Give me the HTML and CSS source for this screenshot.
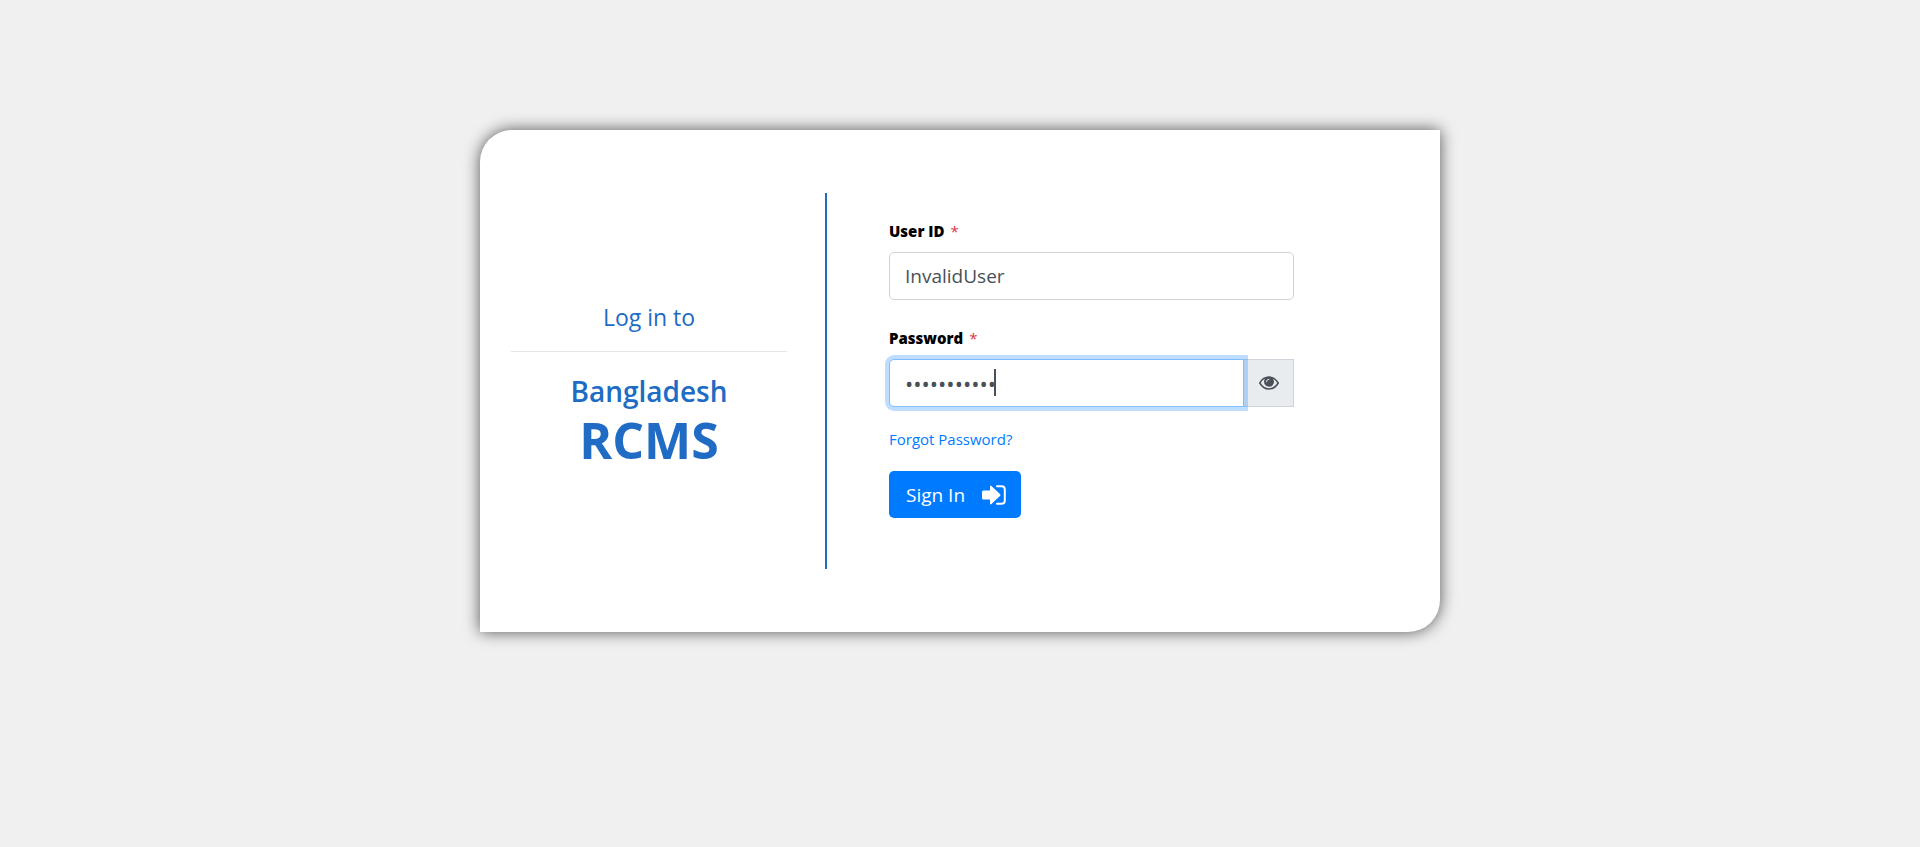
FILE: index.html
```html
<!DOCTYPE html>
<html lang="en">
<head>
<meta charset="utf-8">
<meta name="viewport" content="width=device-width, initial-scale=1">
<title>Bangladesh RCMS</title>
<link rel="stylesheet" href="styles.css">
</head>
<body>
<main class="card">
  <section class="brand">
    <p class="brand-lead">Log in to</p>
    <hr class="brand-rule">
    <h1 class="brand-title"><span class="brand-country">Bangladesh</span> <strong class="brand-name">RCMS</strong></h1>
  </section>
  <form class="login">
    <div class="field">
      <label class="label" for="user">User ID <span class="required">*</span></label>
      <input class="input" id="user" type="text" value="InvalidUser">
    </div>
    <div class="field">
      <label class="label" for="password">Password <span class="required">*</span></label>
      <div class="group">
        <input class="input input-password" id="password" type="password" value="InvalidPass">
        <span class="caret"></span>
        <button class="reveal" type="button" aria-label="Show password">
          <svg width="20" height="14" viewBox="0 0 20 14" fill="none" stroke="currentColor">
            <path d="M.8 7C3 3.200 6.300 1.100 10 1.100S17 3.200 19.200 7C17 10.800 13.700 12.900 10 12.900S3 10.800.8 7Z" stroke-width="1.500"/>
            <circle cx="10" cy="5.800" r="5" fill="currentColor" stroke="none"/>
            <path d="M7.400 5.800A2.600 2.600 0 0 1 10 3.200" stroke="#e9ecef" stroke-width=".9" stroke-linecap="round"/>
          </svg>
        </button>
      </div>
    </div>
    <a class="forgot" href="#">Forgot Password?</a>
    <button class="submit" type="submit">Sign In
      <svg width="24" height="20" viewBox="0 0 24 20">
        <path d="M1.500 5.400H8V1.600Q8-.2 9.400 1L18 9.100Q18.900 10 18 10.900L9.400 19Q8 20.200 8 18.400V14.600H1.500Q0 14.600 0 13.100V6.900Q0 5.400 1.500 5.400Z" fill="currentColor"/>
        <path d="M15 1.200H19.500Q22.800 1.200 22.800 4.500V15.500Q22.800 18.800 19.500 18.800H15" fill="none" stroke="currentColor" stroke-width="2" stroke-linecap="round"/>
      </svg>
    </button>
  </form>
</main>
</body>
</html>
```
FILE: styles.css
```css
* {
  box-sizing: border-box;
}

body {
  min-height: 100vh;
  margin: 0;
  padding: 130px 0;
  background: #f0f0f0;
  color: #000;
  font-family: "Open Sans", "Noto Sans", sans-serif;
  font-size: 15px;
  line-height: 24px;
}

.card {
  display: flex;
  width: 50%;
  margin: 0 auto;
  padding: 63px 31px;
  background: #fff;
  border-radius: 32px 0;
  box-shadow: 0 0 16px rgba(0, 0, 0, 0.65);
}

.brand {
  display: flex;
  flex: 0 0 316px;
  flex-direction: column;
  justify-content: center;
  padding: 6px 38px 0 0;
  border-right: 2px solid #206bc4;
  color: #206bc4;
  text-align: center;
}

.brand-lead {
  margin: 0;
  font-size: 23px;
  line-height: 36px;
}

.brand-rule {
  width: 100%;
  margin: 16px 0 20px;
  border: 0;
  border-top: 1px solid #e6e6e6;
}

.brand-title {
  display: flex;
  flex-direction: column;
  margin: 0;
  font-size: 28px;
  font-weight: 600;
  line-height: 38px;
}

.brand-name {
  font-size: 50px;
  font-weight: 700;
  line-height: 60px;
}

.login {
  display: flex;
  flex: 1;
  flex-direction: column;
  align-items: flex-start;
  padding: 26px 115px 51px 62px;
}

.field {
  width: 100%;
  margin-bottom: 26px;
}

.field + .field {
  margin-bottom: 20px;
}

.label {
  display: block;
  margin-bottom: 9px;
  font-weight: 800;
}

.required {
  margin-left: 2px;
  color: #dc3545;
  font-weight: 400;
}

.input {
  width: 100%;
  height: 48px;
  padding: 8px 15px;
  border: 1px solid #ced4da;
  border-radius: 5px;
  background: #fff;
  color: #495057;
  font: inherit;
  font-size: 19px;
}

.group {
  position: relative;
  display: flex;
}

.input-password {
  flex: 1;
  border-color: #80bdff;
  border-radius: 5px 0 0 5px;
  outline: 0;
  box-shadow: 0 0 0 4px rgba(0, 123, 255, 0.25);
  font-size: 22px;
  z-index: 1;
}

.caret {
  position: absolute;
  top: 10px;
  left: 105px;
  z-index: 2;
  width: 2px;
  height: 27px;
  background: #495057;
}

.reveal {
  display: flex;
  flex: 0 0 50px;
  align-items: center;
  justify-content: center;
  padding: 0;
  border: 1px solid #ced4da;
  border-left: 0;
  background: #e9ecef;
  color: #495057;
}

.forgot {
  margin-bottom: 20px;
  color: #007bff;
  text-decoration: none;
}

.submit {
  display: flex;
  align-items: center;
  gap: 17px;
  height: 47px;
  padding: 0 15px 0 17px;
  border: 0;
  border-radius: 5px;
  background: #007bff;
  color: #fff;
  font: inherit;
  font-size: 19px;
}
```
